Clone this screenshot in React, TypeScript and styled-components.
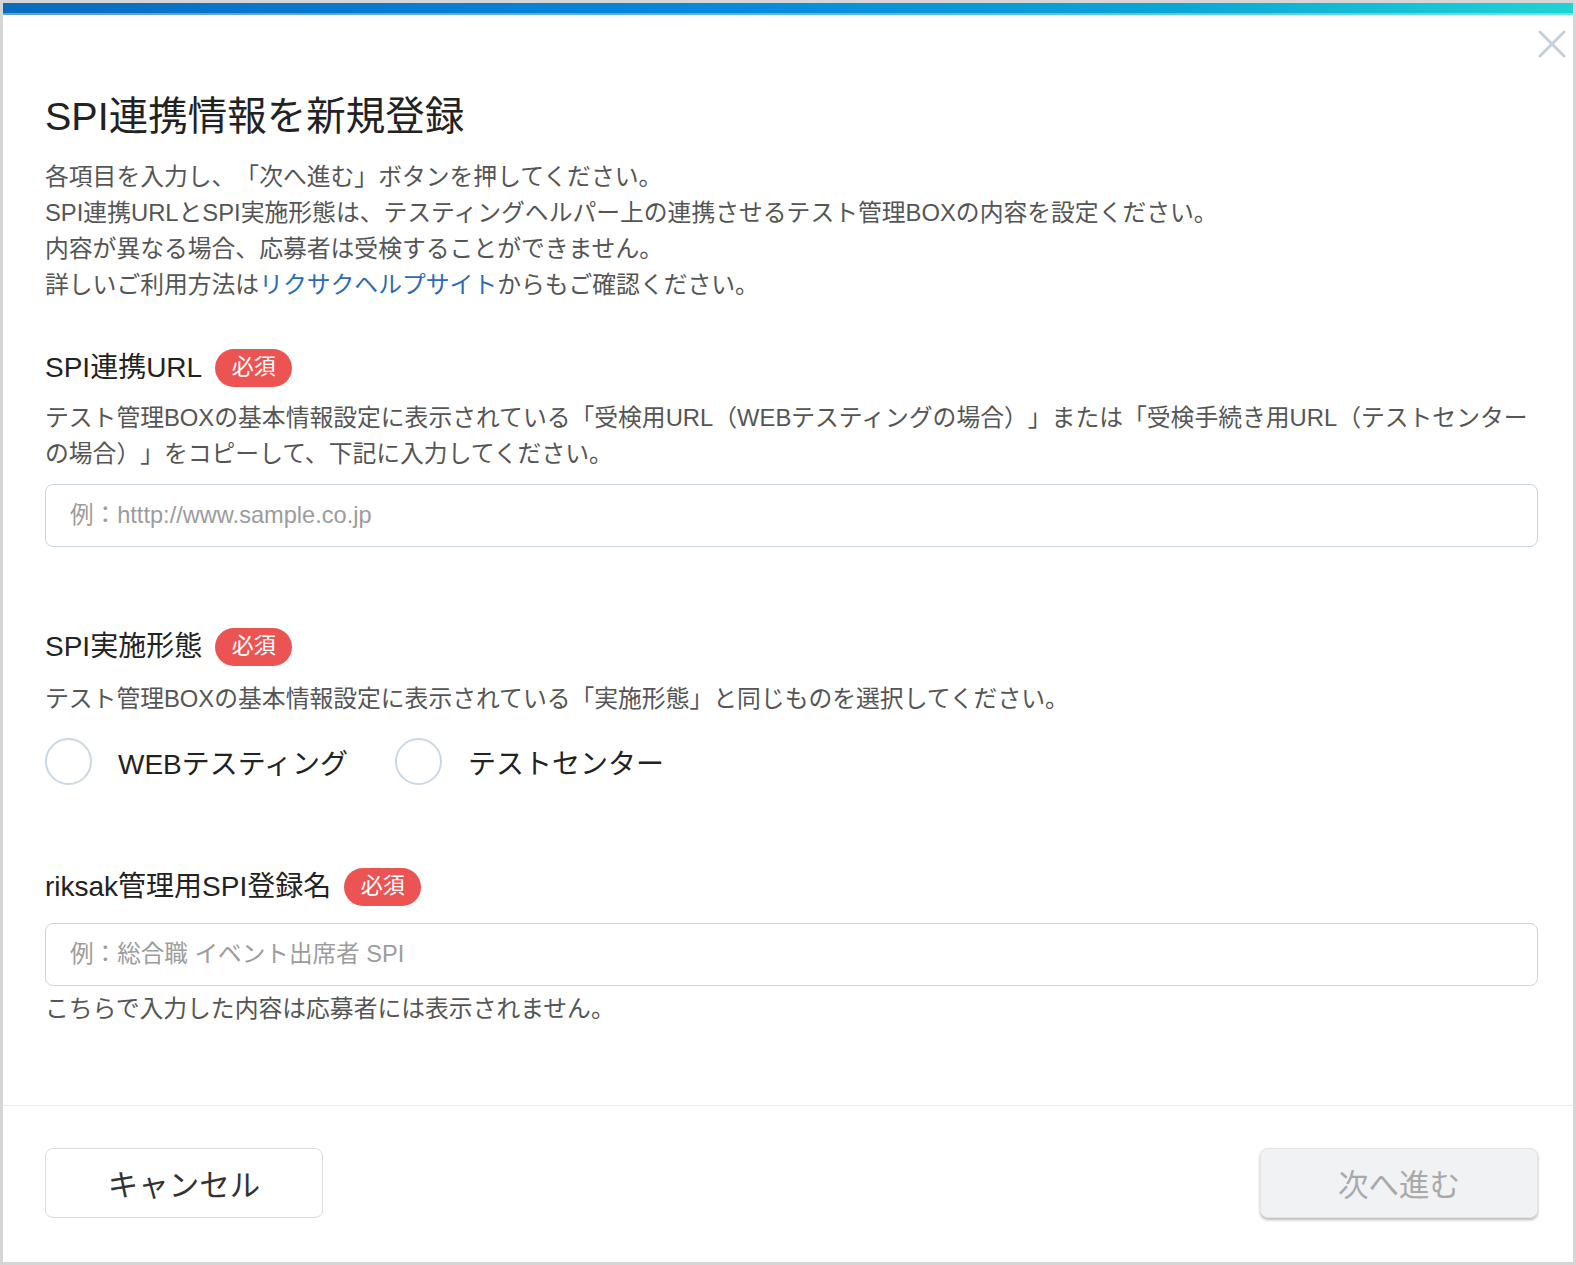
import { createGlobalStyle, styled } from 'styled-components';

const GlobalStyle = createGlobalStyle`
  html, body {
    margin: 0;
    padding: 0;
    background: #fff;
  }
  body {
    font-family: "Liberation Sans", "Noto Sans CJK JP", sans-serif;
    color: #222;
    text-spacing-trim: space-all;
  }
  * {
    box-sizing: border-box;
  }
`;

const Modal = styled.div`
  display: flex;
  flex-direction: column;
  width: 1576px;
  height: 1265px;
  border: 3px solid #d6d6d6;
  background: #fff;
`;

const TopBar = styled.div`
  height: 12px;
  background: linear-gradient(90deg, #0a6cbf 0%, #0588dc 45%, #0aa7d4 75%, #1fd3d4 100%);
  box-shadow: inset 0 -2px 0 rgba(255, 255, 255, 0.35);
`;

const CloseRow = styled.div`
  display: flex;
  justify-content: flex-end;
  padding: 15px 7px 0 0;
`;

const CloseButton = styled.button`
  width: 28px;
  height: 28px;
  padding: 0;
  border: none;
  background: none;
  cursor: pointer;
  display: flex;
`;

const Body = styled.div`
  flex: 1;
  padding: 0 35px 0 42px;
`;

const Title = styled.h1`
  margin: 34px 0 19px;
  font-size: 39.5px;
  line-height: 48px;
  font-weight: 400;
  color: #222;
`;

const Text = styled.p<{ $mt?: number }>`
  margin: ${({ $mt }) => $mt ?? 0}px 0 0;
  font-size: 23.8px;
  line-height: 36px;
  color: #555;
`;

const Link = styled.a`
  color: #2b6cb4;
  text-decoration: none;
`;

const LabelRow = styled.div<{ $mt: number }>`
  display: flex;
  align-items: center;
  gap: 13px;
  height: 38px;
  margin-top: ${({ $mt }) => $mt}px;
`;

const Label = styled.span`
  font-size: 28px;
  line-height: 38px;
  color: #222;
`;

const Required = styled.span`
  display: inline-flex;
  align-items: center;
  justify-content: center;
  width: 77px;
  height: 38px;
  padding-bottom: 3px;
  border-radius: 19px;
  background: #ec5453;
  color: #fff;
  font-size: 22px;
  line-height: 1;
`;

const Input = styled.input<{ $mt: number }>`
  display: block;
  width: 100%;
  height: 63px;
  margin-top: ${({ $mt }) => $mt}px;
  padding: 0 24px;
  border: 1.5px solid #c9d5e1;
  border-radius: 8px;
  font-family: inherit;
  font-size: 23.6px;
  color: #222;
  outline: none;

  &::placeholder {
    color: #9c9c9c;
  }
`;

const RadioGroup = styled.div`
  display: flex;
  align-items: center;
  gap: 47px;
  margin-top: 21px;
`;

const RadioOption = styled.label`
  display: flex;
  align-items: center;
  gap: 26px;
  cursor: pointer;
  font-size: 28px;
  color: #222;
`;

const RadioCircle = styled.span`
  width: 47px;
  height: 47px;
  border-radius: 50%;
  border: 2px solid #cbd8e4;
  background: #fff;
`;

const Footer = styled.div`
  display: flex;
  align-items: center;
  justify-content: space-between;
  height: 157px;
  padding: 0 35px 3px 42px;
  border-top: 1px solid #ececec;
`;

const Button = styled.button<{ $disabled?: boolean }>`
  width: 278px;
  height: 70px;
  border-radius: 8px;
  font-family: inherit;
  font-size: 30.5px;
  cursor: ${({ $disabled }) => ($disabled ? 'default' : 'pointer')};
  border: 1px solid ${({ $disabled }) => ($disabled ? '#e3e5e8' : '#dcdcdc')};
  background: ${({ $disabled }) => ($disabled ? '#f1f2f4' : '#fff')};
  color: ${({ $disabled }) => ($disabled ? '#a9a9a9' : '#333')};
  box-shadow: ${({ $disabled }) => ($disabled ? '0 2px 3px rgba(0, 0, 0, 0.28)' : 'none')};
`;

const App = () => {
  return (
    <>
      <GlobalStyle />
      <Modal>
        <TopBar />
        <CloseRow>
          <CloseButton aria-label="close">
            <svg width="28" height="28" viewBox="0 0 28 28">
              <path d="M2 2 L26 26 M26 2 L2 26" stroke="#c5d0da" strokeWidth="3" strokeLinecap="round" />
            </svg>
          </CloseButton>
        </CloseRow>
        <Body>
          <Title>SPI連携情報を新規登録</Title>
          <Text>
            各項目を入力し、「次へ進む」ボタンを押してください。
            <br />
            SPI連携URLとSPI実施形態は、テスティングヘルパー上の連携させるテスト管理BOXの内容を設定ください。
            <br />
            内容が異なる場合、応募者は受検することができません。
            <br />
            詳しいご利用方法は<Link href="#">リクサクヘルプサイト</Link>からもご確認ください。
          </Text>

          <LabelRow $mt={46}>
            <Label>SPI連携URL</Label>
            <Required>必須</Required>
          </LabelRow>
          <Text $mt={13}>
            テスト管理BOXの基本情報設定に表示されている「受検用URL（WEBテスティングの場合）」または「受検手続き用URL（テストセンター
            <br />
            の場合）」をコピーして、下記に入力してください。
          </Text>
          <Input $mt={12} placeholder="例：htttp://www.sample.co.jp" />

          <LabelRow $mt={81}>
            <Label>SPI実施形態</Label>
            <Required>必須</Required>
          </LabelRow>
          <Text $mt={15}>テスト管理BOXの基本情報設定に表示されている「実施形態」と同じものを選択してください。</Text>
          <RadioGroup>
            <RadioOption>
              <RadioCircle />
              WEBテスティング
            </RadioOption>
            <RadioOption>
              <RadioCircle />
              テストセンター
            </RadioOption>
          </RadioGroup>

          <LabelRow $mt={83}>
            <Label>riksak管理用SPI登録名</Label>
            <Required>必須</Required>
          </LabelRow>
          <Input $mt={17} placeholder="例：総合職 イベント出席者 SPI" />
          <Text $mt={5}>こちらで入力した内容は応募者には表示されません。</Text>
        </Body>
        <Footer>
          <Button>キャンセル</Button>
          <Button $disabled>次へ進む</Button>
        </Footer>
      </Modal>
    </>
  );
};

export default App;
